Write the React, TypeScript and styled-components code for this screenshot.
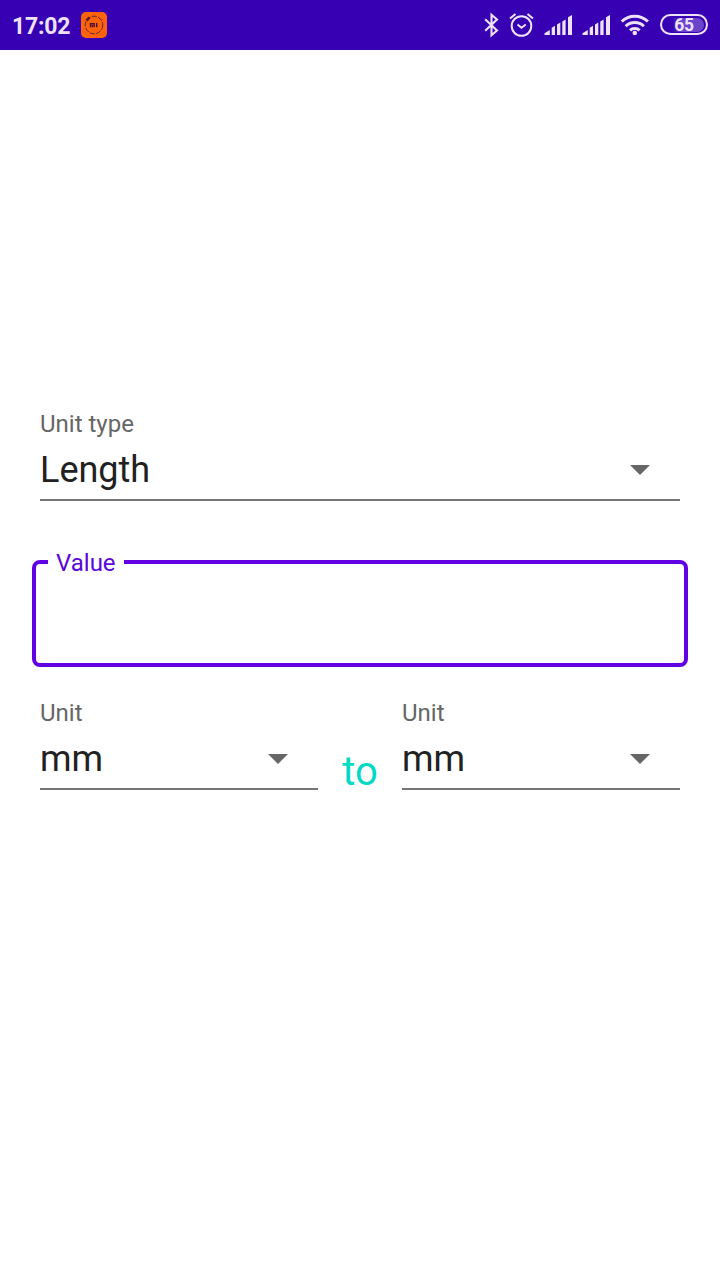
import React from 'react';
import styled, { createGlobalStyle } from 'styled-components';

const GlobalStyle = createGlobalStyle`
  *, *::before, *::after { box-sizing: border-box; }
  body {
    margin: 0;
    background: #ffffff;
    font-family: Roboto, 'Liberation Sans', sans-serif;
  }
`;

const Screen = styled.div`
  display: flex;
  flex-direction: column;
  width: 720px;
  height: 1280px;
  background: #ffffff;
`;

const StatusBar = styled.header`
  display: flex;
  align-items: center;
  justify-content: space-between;
  height: 50px;
  padding: 0 12px;
  background: #3700b3;
  color: #eee2fb;
`;

const StatusGroup = styled.div`
  display: flex;
  align-items: center;
`;

const Clock = styled.span`
  width: 69px;
  padding-top: 3px;
  font-size: 23px;
  line-height: 28px;
  font-weight: 700;
  letter-spacing: -0.2px;
  white-space: nowrap;
`;

const StatusIcon = styled.svg<{ $gap?: number }>`
  display: block;
  flex: none;
  margin-left: ${({ $gap = 0 }) => $gap}px;
`;

const Battery = styled.div`
  display: flex;
  align-items: center;
  justify-content: center;
  width: 48px;
  height: 21px;
  margin: 0 0 1px 10px;
  padding: 2px;
  border: 2px solid #eee2fb;
  border-radius: 11px;
`;

const BatteryLevel = styled.span`
  width: 40px;
  height: 14px;
  border-radius: 7px;
  background: linear-gradient(to right, #3700b3 8px, #6a45cb 18px);
  font-size: 17.5px;
  line-height: 14px;
  font-weight: 700;
  letter-spacing: -0.3px;
  text-align: center;
`;

const Form = styled.main`
  display: flex;
  flex-direction: column;
  padding: 360px 32px 0;
`;

const Field = styled.div<{ $width: number }>`
  display: flex;
  flex-direction: column;
  width: ${({ $width }) => $width}px;
  border-bottom: 2px solid #757575;
`;

const FieldLabel = styled.span`
  font-size: 24px;
  line-height: 28px;
  color: #666666;
`;

const FieldValue = styled.div`
  display: flex;
  align-items: center;
  justify-content: space-between;
  margin-top: 11px;
  padding: 0 30px 8px 0;
  font-size: 36px;
  line-height: 42px;
  color: #212121;
`;

const Arrow = styled.svg`
  display: block;
  width: 20px;
  height: 10px;
  fill: #666666;
`;

const FieldRow = styled.div`
  display: flex;
  justify-content: space-between;
  padding: 0 8px;
`;

const ValueBox = styled.fieldset`
  min-width: 0;
  height: 119px;
  margin: 47px 0 32px;
  padding: 0 12px;
  border: 4px solid #6200e4;
  border-radius: 8px;
`;

const ValueLegend = styled.legend`
  width: 76px;
  height: 28px;
  padding: 2px 8px 0;
  font-size: 24px;
  line-height: 26px;
  color: #5c06da;
  white-space: nowrap;
`;

const To = styled.span`
  padding-top: 49px;
  font-size: 40px;
  line-height: 48px;
  height: 91px;
  color: #03dac5;
`;

function SelectField({ label, value, width }: { label: string; value: string; width: number }) {
  return (
    <Field $width={width}>
      <FieldLabel>{label}</FieldLabel>
      <FieldValue>
        {value}
        <Arrow viewBox="0 0 20 10"><path d="M0 0h20L10 10z" /></Arrow>
      </FieldValue>
    </Field>
  );
}

function Signal({ gap }: { gap: number }) {
  return (
    <StatusIcon $gap={gap} width="28" height="50" viewBox="0 0 28 50" fill="#eee2fb">
      <path d="M.5 35v-1.800L5.800 30V35zM7.700 35v-7.200l3.300-2V35zM13 35V24.600l3.300-2V35zM18.300 35V21.400l3.300-2V35zM24 35V17.300l4-2.300v20z" />
    </StatusIcon>
  );
}

export default function App() {
  return (
    <Screen>
      <GlobalStyle />
      <StatusBar>
        <StatusGroup>
          <Clock>17:02</Clock>
          <StatusIcon width="26" height="50" viewBox="0 0 26 50" fill="none">
            <rect y="12" width="26" height="26" rx="5" fill="#ff6309" />
            <circle cx="13" cy="25" r="8.800" stroke="#5a2038" strokeWidth="1" strokeDasharray="5 1.500" />
            <path d="M5.500 20.500 8.500 17.500" stroke="#5a1838" strokeWidth="2.500" />
            <path d="M9.500 27.200v-3.500h3.700v3.500M11.400 25v2.200M15.700 23v4.200" stroke="#4a1040" strokeWidth="1.400" />
          </StatusIcon>
        </StatusGroup>
        <StatusGroup>
          <StatusIcon width="15" height="50" viewBox="0 0 15 50" fill="none" stroke="#eee2fb" strokeWidth="2.100">
            <path d="M1.200 19.300 13 30.500 7.500 35.200V14.800L13 19.500 1.200 30.700" />
          </StatusIcon>
          <StatusIcon $gap={10} width="25" height="50" viewBox="0 0 25 50" fill="none" stroke="#eee2fb" strokeWidth="2">
            <circle cx="12.500" cy="26" r="9.800" />
            <path d="m8.500 24.500 4 3.200 4.300-3.200M1 18.500 6.500 14M24 18.500 18.500 14" />
          </StatusIcon>
          <Signal gap={10} />
          <Signal gap={10} />
          <StatusIcon $gap={10} width="30" height="50" viewBox="0 0 30 50" fill="none" stroke="#eee2fb" strokeWidth="3">
            <path d="M1.700 21.500a19 19 0 0 1 26.200 0M5.700 26.200a13 13 0 0 1 18.200 0M10 30.300a7 7 0 0 1 9.600 0" />
            <circle cx="14.800" cy="33" r="2.300" fill="#eee2fb" stroke="none" />
          </StatusIcon>
          <Battery><BatteryLevel>65</BatteryLevel></Battery>
        </StatusGroup>
      </StatusBar>
      <Form>
        <FieldRow>
          <SelectField label="Unit type" value="Length" width={640} />
        </FieldRow>
        <ValueBox>
          <ValueLegend>Value</ValueLegend>
        </ValueBox>
        <FieldRow>
          <SelectField label="Unit" value="mm" width={278} />
          <To>to</To>
          <SelectField label="Unit" value="mm" width={278} />
        </FieldRow>
      </Form>
    </Screen>
  );
}
